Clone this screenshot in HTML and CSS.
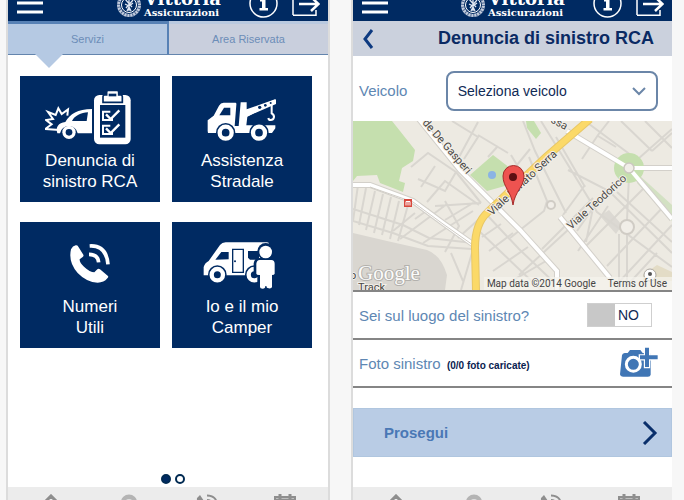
FILE: index.html
```
<!DOCTYPE html>
<html lang="it">
<head>
  <meta charset="UTF-8">
  <title>Vittoria Assicurazioni</title>
  <link rel="stylesheet" href="styles.css">
</head>
<body>

  <!-- Shared icons -->
  <svg class="sprite" aria-hidden="true">
    <symbol id="menu" viewBox="0 -19 26 40">
      <path d="M0 -7H26M0 3H26M0 12H26" stroke="#fff" stroke-width="3"/>
    </symbol>
    <symbol id="seal" viewBox="0 -19 26 40">
      <circle cx="13" cy="5" r="10.500" fill="none" stroke="#c3cddd" stroke-width="3"/>
      <circle cx="13" cy="5" r="10.500" fill="none" stroke="#4a6490" stroke-width="3" stroke-dasharray="1 2"/>
      <circle cx="13" cy="5" r="7.500" fill="#002a62" stroke="#fff"/>
      <path d="M13 -3V11M9 -1L16 7M17 0L10 8M9 4L13 6L17 3M11 11L13 7L15 11" fill="none" stroke="#dfe6f0" stroke-width="1.300"/>
    </symbol>
    <symbol id="info" viewBox="0 -19 29 40">
      <circle cx="14.500" cy="3.500" r="13.500" fill="none" stroke="#fff" stroke-width="1.500"/>
      <path d="M11 -1H16.500V8H19V10.500H10.500V8H13V1.500H11Z" fill="#fff"/>
      <circle cx="14.500" cy="-5" r="2" fill="#fff"/>
    </symbol>
    <symbol id="exit" viewBox="0 -19 28 40">
      <path d="M1 15V-10H24V-4M1 15.300H24V10" fill="none" stroke="#fff" stroke-width="1.500"/>
      <path d="M7 4H26M19 -3L26.500 4L19 11" fill="none" stroke="#fff" stroke-width="2.500"/>
    </symbol>
    <symbol id="home" viewBox="0 0 24 24">
      <path d="M3 11L12 2L21 11M6 10V21H18V10" fill="none" stroke="#8e8e8e" stroke-width="3"/>
    </symbol>
    <symbol id="user" viewBox="0 0 24 24">
      <path d="M12 22C7 16 4 13 4 8A8 7.500 0 0 1 20 8C20 13 17 16 12 22Z" fill="#b4b4b4"/>
      <circle cx="12" cy="9" r="4" fill="#e0e0e0"/>
    </symbol>
    <symbol id="phone" viewBox="0 0 24 24">
      <path d="M2 4L5 1L9 7L7 10C9 14 11 16 15 17L18 15L22 19L19 22C9 22 1 14 2 4Z" fill="#8e8e8e"/>
      <path d="M12 1.500C18 1.500 22 5 22 11M12 6C15 6 17 8 17 11" fill="none" stroke="#8e8e8e" stroke-width="2"/>
    </symbol>
    <symbol id="calendar" viewBox="0 0 24 24">
      <path d="M2 3H22V22H2Z" fill="none" stroke="#8e8e8e" stroke-width="2"/>
      <path d="M2 6H22M7 0V5M17 0V5" stroke="#8e8e8e" stroke-width="3"/>
    </symbol>
  </svg>

  <main class="screens">

    <!-- Home -->
    <section class="screen screen-home">
      <header class="topbar">
        <button class="icon-btn" aria-label="Menu"><svg width="26" height="40"><use href="#menu"/></svg></button>
        <div class="logo">
          <svg width="26" height="40"><use href="#seal"/></svg>
          <div class="logo-text"><span class="logo-name">Vittoria</span><span class="logo-sub">Assicurazioni</span></div>
        </div>
        <button class="icon-btn" aria-label="Info"><svg width="29" height="40"><use href="#info"/></svg></button>
        <button class="icon-btn" aria-label="Esci"><svg width="28" height="40"><use href="#exit"/></svg></button>
      </header>

      <nav class="tabs">
        <button class="tab active">Servizi</button>
        <button class="tab">Area Riservata</button>
      </nav>

      <div class="tiles">
        <button class="tile">
          <svg width="90" height="57" viewBox="90 58 270 171">
            <path d="M134 181L91 178L110 164L93 151L114 148L99 127L122 136L130 116L140 133L159 119L157 138" fill="none" stroke="#fff" stroke-width="6"/>
            <path d="M127 191C121 172 130 160 151 157C166 132 187 119 231 118V191H188A27 27 0 0 0 135 191Z" fill="#fff"/>
            <path d="M171 154C179 138 198 129 219 128L215 154Z" fill="#002a62"/>
            <circle cx="162" cy="188" r="20" fill="#fff"/>
            <circle cx="162" cy="188" r="10" fill="#002a62"/>
            <rect x="232" y="70" width="120" height="158" rx="20" fill="#002a62"/>
            <rect x="237" y="76" width="110" height="148" rx="16" fill="#fff"/>
            <rect x="255" y="106" width="76" height="98" fill="#002a62"/>
            <path d="M264 98V81Q264 76 269 76H275V66Q275 62 280 62H306Q311 62 311 66V76H317Q322 76 322 81V98Z" fill="#fff" stroke="#002a62" stroke-width="5"/>
            <path d="M281 72H304V80H281Z" fill="#002a62"/>
            <path d="M286 126H264V151H291V144M286 168H264V193H291V186" fill="none" stroke="#fff" stroke-width="6"/>
            <path d="M273 134L287 148L313 122M273 176L287 190L313 164" fill="none" stroke="#fff" stroke-width="7"/>
          </svg>
          <span>Denuncia di<br>sinistro RCA</span>
        </button>
        <button class="tile">
          <svg width="90" height="57" viewBox="96 58 270 171">
            <path d="M128 184V152L146 138L162 108Q167 99 176 99H212Q215 100 214 105L209 169H221L227 98H245V119L330 89L333 97L247 141L244 167H331V176L321 190H129Z" fill="#fff"/>
            <path d="M163 137L177 114H196V137Z" fill="#002a62"/>
            <path d="M240 125L333 89V103L244 141Z" fill="#fff"/>
            <g fill="#002a62">
              <circle cx="284" cy="113" r="5"/>
              <circle cx="301" cy="107" r="4"/>
              <circle cx="317" cy="100" r="3"/>
            </g>
            <path d="M320 104V131C332 138 327 151 317 151Q311 151 310 145" fill="none" stroke="#fff" stroke-width="6"/>
            <circle cx="182" cy="189" r="29" fill="#002a62"/>
            <circle cx="282" cy="189" r="29" fill="#002a62"/>
            <circle cx="182" cy="189" r="18" fill="none" stroke="#fff" stroke-width="13"/>
            <circle cx="282" cy="189" r="18" fill="none" stroke="#fff" stroke-width="13"/>
          </svg>
          <span>Assistenza<br>Stradale</span>
        </button>
        <button class="tile">
          <svg width="90" height="57" viewBox="90 61 270 171">
            <path d="M168 104Q173 94 182 92Q187 91 190 96L205 120Q207 124 203 127L194 134Q193 143 207 156Q225 173 238 173L247 164Q251 161 255 164L278 183Q282 187 277 191Q267 204 248 204Q215 203 188 175Q159 143 168 104Z" fill="#fff"/>
            <path d="M224 94Q274 91 279 149M222 119Q249 119 251 143" fill="none" stroke="#fff" stroke-width="11"/>
          </svg>
          <span>Numeri<br>Utili</span>
        </button>
        <button class="tile">
          <svg width="90" height="57" viewBox="96 61 270 171">
            <path d="M116 178V157Q119 145 131 139L165 91Q171 83 182 83H306Q314 84 312 91V182H116Z" fill="#fff"/>
            <path d="M151 135L169 112H191V134ZM249 109H282V135H255L249 129Z" fill="#002a62"/>
            <path d="M203 104H235V173H203Z" fill="#fff" stroke="#002a62" stroke-width="4"/>
            <circle cx="210" cy="140" r="3" fill="#002a62"/>
            <circle cx="157" cy="180" r="28" fill="#002a62"/>
            <circle cx="157" cy="180" r="17" fill="none" stroke="#fff" stroke-width="13"/>
            <circle cx="268" cy="180" r="28" fill="#002a62"/>
            <circle cx="268" cy="180" r="17" fill="none" stroke="#fff" stroke-width="13"/>
            <path d="M283 180H315V205H283Z" fill="#002a62"/>
            <circle cx="302" cy="110" r="25" fill="#002a62"/>
            <path d="M283 133H321Q333 134 333 146V184H325V226H280V184H269V146Q270 134 283 133Z" fill="#002a62" stroke="#002a62" stroke-width="6"/>
            <circle cx="302" cy="112" r="19" fill="#fff"/>
            <path d="M284 136H319Q329 137 329 147V177Q328 181 321 181V217Q320 222 311 221Q304 221 304 214H301Q301 222 293 222Q285 222 285 217V181Q275 182 274 177V147Q275 137 284 136Z" fill="#fff"/>
          </svg>
          <span>Io e il mio<br>Camper</span>
        </button>
      </div>

      <div class="dots">
        <span class="dot current"></span>
        <span class="dot"></span>
      </div>

      <nav class="bottombar">
        <a href="#" aria-label="Home"><svg width="24" height="24"><use href="#home"/></svg></a>
        <a href="#" aria-label="Agenzie"><svg width="24" height="24"><use href="#user"/></svg></a>
        <a href="#" aria-label="Telefono"><svg width="24" height="24"><use href="#phone"/></svg></a>
        <a href="#" aria-label="Scadenze"><svg width="24" height="24"><use href="#calendar"/></svg></a>
      </nav>
    </section>

    <!-- Claim form -->
    <section class="screen">
      <header class="topbar">
        <button class="icon-btn" aria-label="Menu"><svg width="26" height="40"><use href="#menu"/></svg></button>
        <div class="logo">
          <svg width="26" height="40"><use href="#seal"/></svg>
          <div class="logo-text"><span class="logo-name">Vittoria</span><span class="logo-sub">Assicurazioni</span></div>
        </div>
        <button class="icon-btn" aria-label="Info"><svg width="29" height="40"><use href="#info"/></svg></button>
        <button class="icon-btn" aria-label="Esci"><svg width="28" height="40"><use href="#exit"/></svg></button>
      </header>

      <div class="titlebar">
        <button class="icon-btn" aria-label="Indietro">
          <svg width="12" height="20" viewBox="0 0 12 20"><path d="M10 1L3 10L10 19" fill="none" stroke="#0d3a80" stroke-width="3"/></svg>
        </button>
        <h1>Denuncia di sinistro RCA</h1>
      </div>

      <div class="row vehicle">
        <label for="veicolo">Veicolo</label>
        <div class="select">
          <select id="veicolo">
            <option>Seleziona veicolo</option>
          </select>
          <svg class="caret" width="14" height="9" viewBox="0 0 14 9"><path d="M1 1L7 7L13 1" fill="none" stroke="#6b86a8" stroke-width="2"/></svg>
        </div>
      </div>

      <div class="map">
        <svg class="map-canvas" viewBox="0 0 319 169" preserveAspectRatio="xMidYMid slice">
          <rect width="319" height="169" fill="#edeae2"/>
          <path d="M0 0H39L47 10L62 29L60 40L49 47L46 60L52 62L50 71L27 62L24 54L4 55L0 60Z" fill="#c5dfae"/>
          <path d="M0 112L34 120L74 129Q88 134 94 154L92 169H0Z" fill="#d9d6d0"/>
          <path d="M117 54L140 34L157 47L152 65L134 70Z" fill="#c5dfae"/>
          <path d="M173 0H181L188 12L183 18L174 7Z" fill="#c5dfae"/>
          <path d="M286 54L319 84V100L284 62Z" fill="#d3e1c3"/>
          <path d="M247 95L256 89L269 104L263 113Z" fill="#dcd9d3"/>
          <path d="M290 154L304 144L319 151V160H290Z" fill="#e3dcc6"/>
          <circle cx="139" cy="54" r="4" fill="#8ab4e4"/>

          <!-- Side streets -->
          <g fill="none" stroke="#d9d6d0" stroke-width="2">
            <path d="M58 46L75 32L103 51L92 70L65 58M74 81L92 60L126 84M82 45L68 66M103 51L128 82M82 85L128 82M92 99L120 82M62 98L76 88M40 110L62 92M47 118L94 83M70 122L120 90M92 131L106 105L92 80M105 117L125 99M99 0L125 16L111 38M125 1L105 38M125 14L155 32M145 25L135 36"/>
            <path d="M0 88L50 104L76 117L120 122M0 100L40 112L75 125L119 128M5 64L0 100M13 67L6 104M22 70L13 109M30 73L21 112M38 76L29 114M46 80L37 118M55 84L45 120M119 132L108 169M98 132L110 160"/>
            <path d="M134 94L166 128L209 169M124 108L188 169M136 130L160 112M140 150L175 126M150 165L193 140M129 116L148 103"/>
            <path d="M170 0L182 30L213 92M188 0L244 91L319 146M177 28L164 44L158 34M176 36L194 80L202 84M194 80L191 90L157 117M203 16L232 66M229 38L245 14L256 0M245 15L263 26M215 49L256 70L319 132M232 0L290 43M268 0L299 30M299 30L319 12M285 38L319 8M292 0L319 27M232 64L210 94M240 77L189 128M255 85L225 130M264 71L319 121M276 55L274 99M274 114V169M266 113V169M294 64L232 126M312 84L254 145M319 104L266 161M304 132L270 169M216 108L166 154M224 110L240 87L233 121"/>
          </g>
          <g fill="#f1eee8" stroke="#d0ccc5" stroke-width="2">
            <circle cx="198" cy="84" r="4"/>
            <circle cx="274" cy="106" r="7"/>
          </g>

          <!-- Main roads -->
          <path d="M65 -3L107 49L167 109L204 150V169M0 64H17L60 80L90 102L121 124M214 10L276 47H319M276 47L319 98M207 96L257 157" fill="none" stroke="#d3d0ca" stroke-width="6"/>
          <circle cx="276" cy="47" r="15" fill="#c5dfae"/>
          <path d="M65 -3L107 49L167 109L204 150V169M0 64H17L60 80L90 102L121 124M214 10L276 47H319M276 47L319 98M207 96L257 157" fill="none" stroke="#fff" stroke-width="4"/>
          <path d="M17 66L60 81L90 103L120 124" fill="none" stroke="#d0ccc5" stroke-width="1"/>
          <circle cx="276" cy="47" r="5" fill="#f1eee8" stroke="#cbc7c0" stroke-width="1.500"/>
          <path d="M123 169L122 127Q122 102 135 91L157 70L193 36L237 -2" fill="none" stroke="#e8c766" stroke-width="8"/>
          <path d="M123 169L122 127Q122 102 135 91L157 70L193 36L237 -2" fill="none" stroke="#fbd968" stroke-width="6"/>

          <!-- Street names -->
          <g class="street">
            <text transform="translate(69 2) rotate(49)">de De Gasperi</text>
            <text transform="translate(139 95) rotate(-43)">Viale Renato Serra</text>
            <text transform="translate(218 109) rotate(-42)">Viale Teodorico</text>
            <text transform="translate(197 1) rotate(28)">ssa</text>
            <text x="-3" y="158">o</text>
            <text x="5" y="170">Track</text>
          </g>

          <rect x="51" y="78" width="8" height="8" fill="#d8483c"/>
          <path d="M53 84.500V80.500H57V84.500M55 80.500V84.500" fill="none" stroke="#fff" stroke-width="1"/>
          <circle cx="297" cy="154" r="6" fill="#fff" stroke="#aaa69f"/>
          <circle cx="297" cy="153" r="2" fill="#555"/>

          <text class="map-brand" x="5" y="159">Google</text>

          <path d="M160 84C158 70 150 66 150 55A10.500 10.500 0 0 1 171 55C171 66 162 70 160 84Z" fill="#ee5350" stroke="#a52b2a"/>
          <circle cx="160" cy="56" r="4" fill="#5c0f12"/>
        </svg>
        <div class="map-legal">
          <span>Map data ©2014 Google</span>
          <a href="#">Terms of Use</a>
        </div>
      </div>

      <div class="row">
        <label for="luogo">Sei sul luogo del sinistro?</label>
        <label class="switch">
          <input type="checkbox" id="luogo">
          <span class="knob"></span>
          <span class="state">NO</span>
        </label>
      </div>

      <div class="row">
        <span>Foto sinistro <small>(0/0 foto caricate)</small></span>
        <button class="icon-btn" aria-label="Aggiungi foto">
          <svg width="40" height="32" viewBox="0 0 120 96">
            <path d="M12 25Q13 19 20 18H29L36 9H67L74 18H92Q98 19 98 26V83Q97 89 90 89H16Q7 89 6 82Z" fill="#4076b5"/>
            <circle cx="46" cy="52" r="21" fill="none" stroke="#fff" stroke-width="9"/>
            <path d="M87 2V64M62 31H119" stroke="#fff" stroke-width="19"/>
            <path d="M87 2V60M66 31H119" stroke="#4076b5" stroke-width="12"/>
          </svg>
        </button>
      </div>

      <button class="next">
        Prosegui
        <svg width="16" height="24" viewBox="0 0 16 24"><path d="M2 1L13 12L2 23" fill="none" stroke="#0a2f6b" stroke-width="3"/></svg>
      </button>

      <nav class="bottombar">
        <a href="#" aria-label="Home"><svg width="24" height="24"><use href="#home"/></svg></a>
        <a href="#" aria-label="Agenzie"><svg width="24" height="24"><use href="#user"/></svg></a>
        <a href="#" aria-label="Telefono"><svg width="24" height="24"><use href="#phone"/></svg></a>
        <a href="#" aria-label="Scadenze"><svg width="24" height="24"><use href="#calendar"/></svg></a>
      </nav>
    </section>

  </main>
</body>
</html>
```
FILE: styles.css
```
* {
  box-sizing: border-box;
}

body {
  margin: 0;
  font-family: "Liberation Sans", Arial, sans-serif;
  background: #f7f7f7;
}

button {
  border: 0;
  padding: 0;
  background: none;
  font-family: inherit;
  cursor: pointer;
}

svg {
  display: block;
  flex-shrink: 0;
}

.sprite {
  position: absolute;
  width: 0;
  height: 0;
}

.screens {
  display: grid;
  grid-template-columns: 324fr 321fr;
  gap: 21px;
  height: 100vh;
  padding: 0 12px 0 6px;
  overflow: hidden;
}

.screen {
  display: flex;
  flex-direction: column;
  min-width: 0;
  background: #fff;
  border-left: 2px solid #dcdcdc;
}

.screen-home {
  border-right: 2px solid #dcdcdc;
}

/* Top bar */
.topbar {
  display: flex;
  align-items: flex-end;
  height: 21px;
  padding: 0 8px 0 9px;
  gap: 14px;
  overflow: hidden;
  background: #002a62;
}

.logo {
  display: flex;
  align-items: flex-end;
  gap: 2px;
  margin-left: auto;
  margin-right: 14px;
  color: #fff;
  font-family: "DejaVu Serif", serif;
  font-weight: bold;
}

.logo-text {
  display: flex;
  flex-direction: column;
  padding-bottom: 2px;
}

.logo-name {
  font-size: 18px;
  line-height: 16px;
}

.logo-sub {
  font-size: 10px;
  line-height: 12px;
}

/* Tabs */
.tabs {
  display: flex;
  height: 34px;
}

.tab {
  position: relative;
  flex: 1;
  border-top: 3px solid #b9c9df;
  border-bottom: 1px solid #6485ad;
  background: #c9cfdd;
  color: #6c8db8;
  font-size: 11px;
}

.tab.active {
  border-top-color: #5781b5;
  border-right: 2px solid #5781b5;
  background: #b5c9e3;
}

.tab.active::after {
  content: "";
  position: absolute;
  top: 100%;
  left: 27px;
  border: 14px solid transparent;
  border-top-color: #b5c9e3;
  border-bottom: 0;
}

/* Service tiles */
.tiles {
  display: grid;
  grid-template-columns: 1fr 1fr;
  gap: 20px 12px;
  padding: 21px 16px 0 12px;
}

.tile {
  display: flex;
  flex-direction: column;
  align-items: center;
  gap: 4px;
  padding: 13px 0 10px;
  background: #002a62;
  color: #fff;
  font-size: 17px;
  line-height: 21px;
}

.dots {
  display: flex;
  justify-content: center;
  gap: 4px;
  margin-top: auto;
  padding: 0 0 3px 10px;
}

.dot {
  width: 10px;
  height: 10px;
  border: 2px solid #002a52;
  border-radius: 50%;
}

.dot.current {
  background: #002a62;
}

/* Bottom bar */
.bottombar {
  display: flex;
  height: 13px;
  padding: 7px 4px 0;
  overflow: hidden;
  background: #ececec;
}

.bottombar a {
  display: flex;
  flex: 1;
  justify-content: center;
}

/* Claim form */
.titlebar {
  display: flex;
  align-items: center;
  justify-content: space-between;
  height: 35px;
  padding: 0 18px 0 9px;
  background: #cbd1dd;
}

.titlebar h1 {
  margin: 0;
  color: #0a2a63;
  font-size: 18px;
}

.row {
  display: flex;
  align-items: center;
  justify-content: space-between;
  height: 48px;
  padding: 0 14px 0 6px;
  border-bottom: 2px solid #858585;
  color: #5e87b3;
  font-size: 15px;
}

.row small {
  margin-left: 2px;
  color: #0a2250;
  font-size: 10px;
  font-weight: bold;
}

.row.vehicle {
  height: 65px;
  padding-top: 4px;
  border-bottom: 0;
}

.select {
  position: relative;
  width: 71%;
}

.select select {
  width: 100%;
  height: 40px;
  padding: 0 10px;
  border: 2px solid #6b86a8;
  border-radius: 8px;
  appearance: none;
  background: #fff;
  color: #0f2a55;
  font-family: inherit;
  font-size: 14px;
}

.caret {
  position: absolute;
  top: 16px;
  right: 12px;
  pointer-events: none;
}

.map {
  position: relative;
  border-bottom: 2px solid #858585;
}

.map-canvas {
  width: 100%;
  height: 169px;
}

.street {
  fill: #4a4844;
  stroke: #f3f0ea;
  stroke-width: 2px;
  paint-order: stroke;
  font-family: Roboto, sans-serif;
  font-size: 11px;
}

.map-brand {
  fill: #fbfbfa;
  stroke: #b3b1ad;
  stroke-width: 2px;
  paint-order: stroke;
  font-family: "Liberation Serif", serif;
  font-size: 21px;
}

.map-legal {
  position: absolute;
  right: 0;
  bottom: 0;
  display: flex;
  gap: 12px;
  padding: 0 5px 0 3px;
  background: rgba(245, 243, 238, 0.7);
  color: #444;
  font-family: Roboto, sans-serif;
  font-size: 10px;
  line-height: 13px;
}

.map-legal a {
  color: inherit;
  text-decoration: none;
}

.switch {
  display: flex;
  width: 65px;
  height: 24px;
  margin-right: 6px;
  border: 1px solid #cfcfcf;
  color: #0f2a55;
  font-size: 14px;
  line-height: 22px;
}

.switch input {
  position: absolute;
  opacity: 0;
}

.knob {
  width: 27px;
  background: #c8c8c8;
}

.state {
  padding-left: 3px;
}

.next {
  display: flex;
  align-items: center;
  justify-content: space-between;
  height: 49px;
  margin: 20px 0 auto;
  padding: 0 13px 0 30px;
  border: 1px solid #b0c6df;
  background: #b9cce5;
  color: #4a78b5;
  font-size: 15px;
  font-weight: bold;
}
```
